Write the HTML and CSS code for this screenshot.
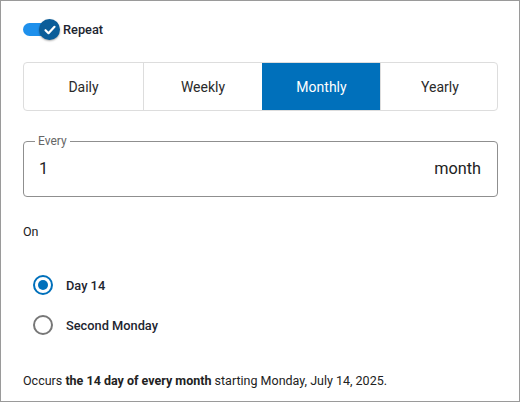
FILE: index.html
```html
<!DOCTYPE html>
<html>
<head>
<meta charset="utf-8">
<link rel="stylesheet" href="styles.css">
</head>
<body>
<div class="frame">
  <div class="toggle-row">
    <span class="toggle">
      <span class="track"></span>
      <span class="knob"><svg width="20" height="20" viewBox="0 0 20 20"><path d="M5.5 10.2l3 3 6-6.4" fill="none" stroke="#fff" stroke-width="2.2" stroke-linecap="round" stroke-linejoin="round"/></svg></span>
    </span>
    <span class="toggle-label">Repeat</span>
  </div>
  <div class="segments">
    <div class="seg">Daily</div>
    <div class="seg">Weekly</div>
    <div class="seg active">Monthly</div>
    <div class="seg">Yearly</div>
  </div>
  <fieldset class="field">
    <legend>Every</legend>
    <span class="value">1</span>
    <span class="unit">month</span>
  </fieldset>
  <div class="on">On</div>
  <div class="radios">
    <label class="radio"><span class="dot checked"></span><span>Day 14</span></label>
    <label class="radio"><span class="dot"></span><span>Second Monday</span></label>
  </div>
  <p class="summary">Occurs <b>the 14 day of every month</b> starting Monday, July 14, 2025.</p>
</div>
</body>
</html>
```
FILE: styles.css
```css
* { box-sizing: border-box; }
html, body { margin: 0; padding: 0; }
body { font-family: Roboto, "Liberation Sans", sans-serif; color: #222; background: #fff; }
.frame {
  width: 520px; height: 402px;
  border: 1px solid #9a9a9a;
  padding: 18px 21px 0 22px;
}
.toggle-row { display: flex; align-items: center; height: 21px; }
.toggle { position: relative; width: 36px; height: 21px; margin-right: 4px; }
.track { position: absolute; left: 0; top: 4px; width: 28px; height: 13px; border-radius: 7px; background: #1e90ec; }
.knob {
  position: absolute; left: 16px; top: 0; width: 21px; height: 21px; border-radius: 50%;
  background: #0b5d99; box-shadow: 0 1px 2px rgba(0,0,0,.35);
  display: flex; align-items: center; justify-content: center;
}
.toggle-label { font-size: 12.8px; font-weight: 500; color: #1d2530; }
.segments {
  margin-top: 22px; display: grid; grid-template-columns: 119px 119px 118px 119px;
  height: 49px; border: 1px solid #ddd; border-radius: 4px; overflow: hidden;
}
.seg { display: flex; align-items: center; justify-content: center; font-size: 14px; color: #2a2a2a; border-left: 1px solid #ddd; }
.seg:first-child { border-left: 0; }
.seg.active { background: #0070bb; color: #fff; border-left-color: #0070bb; }
.field {
  margin: 23px 0 0; padding: 0 16px 0 15px; height: 63px;
  border: 1px solid #8f8f8f; border-radius: 4px;
  display: flex; align-items: center; justify-content: space-between;
}
.field legend { font-size: 12px; color: #666; padding: 0 3px; margin-left: -4px; line-height: 14px; }
.value, .unit { font-size: 16.3px; color: #222; margin-top: -8px; }
.on { margin-top: 27px; font-size: 12.5px; color: #222; }
.radios { margin-top: 36px; display: flex; flex-direction: column; gap: 20px; padding-left: 10px; }
.radio { display: flex; align-items: center; gap: 13px; font-size: 12.8px; font-weight: 500; color: #1d2530; }
.dot { width: 20px; height: 20px; border-radius: 50%; border: 2px solid #777; position: relative; }
.dot.checked { border-color: #0070bb; }
.dot.checked::after { content: ""; position: absolute; left: 3px; top: 3px; width: 10px; height: 10px; border-radius: 50%; background: #0070bb; }
.summary { margin: 38px 0 0; font-size: 12.5px; color: #222; }
.summary b { font-weight: 700; }
```
